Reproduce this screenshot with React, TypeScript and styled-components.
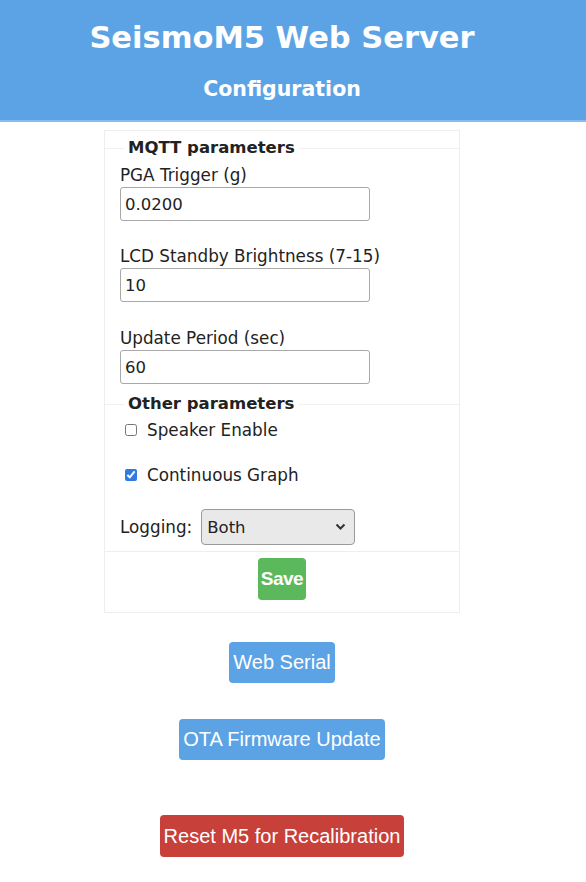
import React from "react";
import styled, { createGlobalStyle } from "styled-components";

const GlobalStyle = createGlobalStyle`
  body {
    margin: 0;
    background: #ffffff;
    font-family: "DejaVu Sans", Verdana, sans-serif;
    color: #222;
  }
`;

const Header = styled.header`
  box-sizing: border-box;
  height: 122px;
  padding-right: 22px;
  background: #5ca3e6;
  border-bottom: 2px solid #86bdf0;
  display: flex;
  flex-direction: column;
  align-items: center;
  color: #fff;
`;

const Title = styled.h1`
  margin: 20px 0 0;
  font-size: 30.5px;
  font-weight: 700;
  line-height: 36px;
`;

const SubTitle = styled.h2`
  margin: 21px 0 0;
  font-size: 20.5px;
  font-weight: 700;
  line-height: 24px;
`;

const Main = styled.main`
  display: flex;
  flex-direction: column;
  align-items: center;
  padding: 8px 22px 26px 0;
`;

const Card = styled.form`
  width: 354px;
  padding: 7px 0 0;
  border: 1px solid #eeeeee;
  display: flex;
  flex-direction: column;
`;

const Fieldset = styled.fieldset<{ $bottom: number }>`
  margin: 0;
  padding: 0 0 ${(p) => p.$bottom}px 15px;
  border: none;
  border-top: 1px solid #f1f1f1;
  display: flex;
  flex-direction: column;
  align-items: flex-start;
`;

const Legend = styled.legend`
  margin-left: 4px;
  padding: 0 4px;
  font-size: 16.5px;
  font-weight: 700;
  line-height: 20px;
`;

const Label = styled.label<{ $top: number }>`
  font-size: 16.8px;
  line-height: 20px;
  margin-top: ${(p) => p.$top}px;
`;

const TextInput = styled.input`
  box-sizing: border-box;
  width: 250px;
  height: 34px;
  margin-top: 2px;
  padding: 0 4px;
  border: 1px solid #a8a8a8;
  border-radius: 3px;
  font-family: "DejaVu Sans", Verdana, sans-serif;
  font-size: 16.5px;
  color: #222;
`;

const CheckRow = styled.label<{ $top: number }>`
  display: flex;
  align-items: center;
  gap: 10px;
  margin-left: 5px;
  margin-top: ${(p) => p.$top}px;
  font-size: 16.8px;
  line-height: 20px;
`;

const Check = styled.input`
  width: 12px;
  height: 12px;
  margin: 0;
  accent-color: #2f7ae5;
`;

const SelectRow = styled.div`
  display: flex;
  align-items: center;
  gap: 9px;
  margin-top: 24px;
  font-size: 16.8px;
`;

const SelectWrap = styled.div`
  position: relative;
  width: 154px;
  height: 36px;
`;

const Select = styled.select`
  appearance: none;
  box-sizing: border-box;
  width: 100%;
  height: 100%;
  padding: 0 5px;
  border: 1px solid #9a9a9a;
  border-radius: 4px;
  background: #e9e9e9;
  font-family: "DejaVu Sans", Verdana, sans-serif;
  font-size: 16.5px;
  color: #222;
`;

const Chevron = styled.svg`
  position: absolute;
  right: 9px;
  top: 14px;
  pointer-events: none;
`;

const SaveRow = styled.div`
  border-top: 1px solid #eeeeee;
  display: flex;
  justify-content: center;
  padding: 6px 0 12px;
`;

const Button = styled.button<{ $color: string }>`
  border: none;
  border-radius: 4px;
  background: ${(p) => p.$color};
  color: #fff;
  font-family: "Liberation Sans", Arial, sans-serif;
  font-size: 20px;
  height: 41px;
  padding: 0 4px;
  cursor: pointer;
`;

const SaveButton = styled(Button)`
  height: 42px;
  font-size: 19px;
  font-weight: 700;
  letter-spacing: -0.5px;
  padding: 0 3px;
`;

const ActionButton = styled(Button)<{ $top: number; $tall?: boolean }>`
  margin-top: ${(p) => p.$top}px;
  height: ${(p) => (p.$tall ? "42px" : "41px")};
`;

export default function App() {
  return (
    <>
      <GlobalStyle />
      <Header>
        <Title>SeismoM5 Web Server</Title>
        <SubTitle>Configuration</SubTitle>
      </Header>
      <Main>
        <Card onSubmit={(e) => e.preventDefault()}>
          <Fieldset $bottom={10}>
            <Legend>MQTT parameters</Legend>
            <Label $top={7}>PGA Trigger (g)</Label>
            <TextInput defaultValue="0.0200" />
            <Label $top={25}>LCD Standby Brightness (7-15)</Label>
            <TextInput defaultValue="10" />
            <Label $top={26}>Update Period (sec)</Label>
            <TextInput defaultValue="60" />
          </Fieldset>
          <Fieldset $bottom={6}>
            <Legend>Other parameters</Legend>
            <CheckRow $top={6}>
              <Check type="checkbox" />
              Speaker Enable
            </CheckRow>
            <CheckRow $top={25}>
              <Check type="checkbox" defaultChecked />
              Continuous Graph
            </CheckRow>
            <SelectRow>
              Logging:
              <SelectWrap>
                <Select defaultValue="both">
                  <option value="none">None</option>
                  <option value="sd">SD Card</option>
                  <option value="mqtt">MQTT</option>
                  <option value="both">Both</option>
                </Select>
                <Chevron width="11" height="8" viewBox="0 0 11 8">
                  <path d="M1.5 1.5 L5.5 5.5 L9.5 1.5" fill="none" stroke="#333" strokeWidth="2" />
                </Chevron>
              </SelectWrap>
            </SelectRow>
          </Fieldset>
          <SaveRow>
            <SaveButton $color="#5cb85c" type="submit">Save</SaveButton>
          </SaveRow>
        </Card>
        <ActionButton $color="#5ca3e6" $top={29}>Web Serial</ActionButton>
        <ActionButton $color="#5ca3e6" $top={36}>OTA Firmware Update</ActionButton>
        <ActionButton $color="#c8403a" $top={55} $tall>Reset M5 for Recalibration</ActionButton>
      </Main>
    </>
  );
}
